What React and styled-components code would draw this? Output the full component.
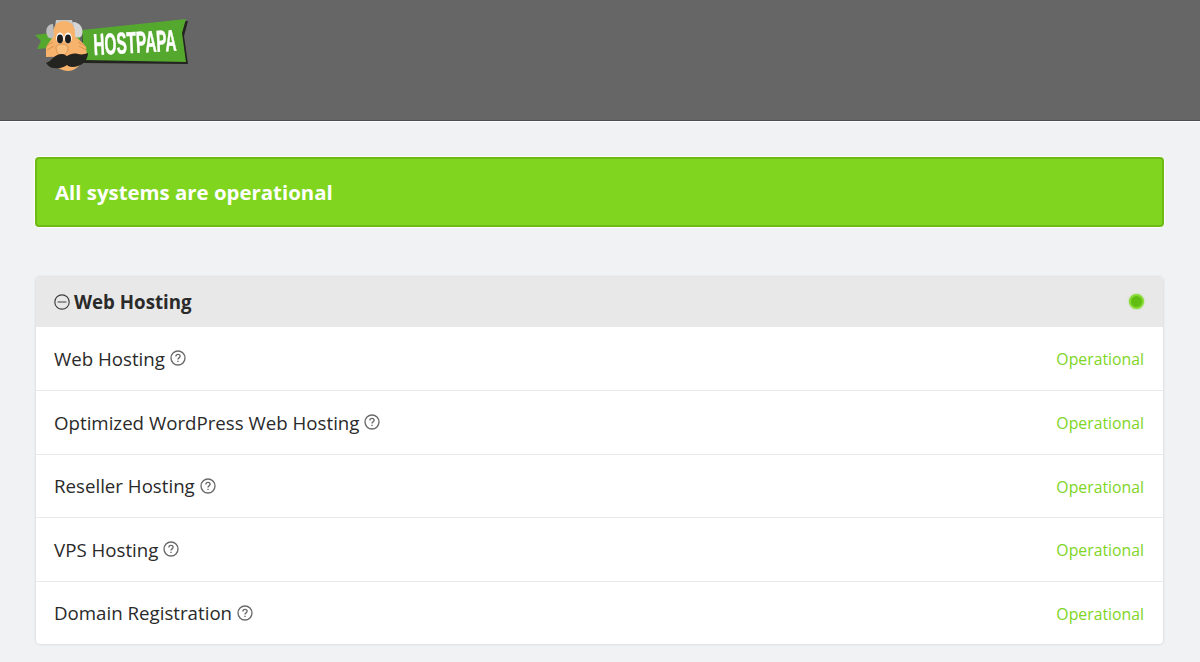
import React from "react";
import styled, { createGlobalStyle } from "styled-components";

const GlobalStyle = createGlobalStyle`
  html, body {
    margin: 0;
    padding: 0;
    height: 662px;
    overflow: hidden;
    background: #f0f2f4;
    font-family: "Open Sans", "Liberation Sans", sans-serif;
    color: #2a2a2a;
  }
`;

const Header = styled.header`
  box-sizing: border-box;
  height: 121px;
  padding: 18px 35px 0;
  background: #666666;
  border-bottom: 1px solid #4f4f4f;
  box-shadow: 0 1px 0 #fbfcfc;
`;

const Logo = styled.svg`
  display: block;
  width: 155px;
  height: 54px;
  overflow: visible;
  filter: blur(0.35px);
`;

const Main = styled.main`
  padding: 36px 36px 0 35px;
`;

const Alert = styled.div`
  box-sizing: border-box;
  display: flex;
  align-items: center;
  height: 70px;
  padding: 0 18px;
  background: #80d51f;
  border: 2px solid #6fba14;
  border-radius: 4px;
  box-shadow: 0 0 0 1px #fbfcfc;
  color: #ffffff;
  font-size: 20.4px;
  font-weight: 700;
`;

const Panel = styled.section`
  margin: 50px 1px 0;
  border-radius: 4px;
  background: #ffffff;
  box-shadow: 0 0 3px rgba(0, 0, 0, 0.16);
  overflow: hidden;
`;

const PanelHead = styled.div`
  box-sizing: border-box;
  display: flex;
  align-items: center;
  height: 49.5px;
  padding: 0 19px 0 18px;
  background: #e8e8e8;
  font-size: 18.7px;
  font-weight: 700;
`;

const HeadTitle = styled.span`
  margin-left: 4px;
  flex: 1;
`;

const Row = styled.div`
  box-sizing: border-box;
  display: flex;
  align-items: center;
  justify-content: space-between;
  height: 63.5px;
  padding: 0 19px 0 18px;
  border-top: ${(p) => (p.$first ? "none" : "1px solid #e8eaec")};
  font-size: 18.7px;
`;

const Name = styled.span`
  display: flex;
  align-items: center;
  gap: 5px;
`;

const Status = styled.span`
  padding-top: 2px;
  color: #80d51f;
  font-size: 15.8px;
`;

const Dot = styled.span`
  display: block;
  box-sizing: border-box;
  width: 15px;
  height: 15px;
  margin-right: 0.5px;
  border-radius: 50%;
  background: #62bd12;
  border: 2px solid #86da33;
  box-shadow: 0 0 2px rgba(126, 214, 28, 0.7);
`;

const MinusIcon = () => (
  <svg width="16" height="16" viewBox="0 0 16 16" fill="none" stroke="#3f3f3f" strokeWidth="1.2">
    <circle cx="8" cy="8" r="7.2" />
    <path d="M3.6 8h8.8" />
  </svg>
);

const HelpIcon = () => (
  <svg width="16" height="16" viewBox="0 0 16 16" fill="none" stroke="#6a6a6a" strokeWidth="1.35">
    <circle cx="8" cy="8" r="7" />
    <path d="M5.9 6.4c0-1.2 1-2 2.1-2s2.1.8 2.1 1.9c0 1.5-2.1 1.6-2.1 3.1" />
    <path d="M8 10.8v1.2" />
  </svg>
);

// viewBox uses page coordinates, so points can be read straight off the screenshot
const HostPapaLogo = () => (
  <Logo viewBox="35 18 155 54" role="img" aria-label="HostPapa">
    <path d="M82 33L188 21L184 36L188 64L83 63Z" fill="#23231f" />
    <path d="M82 30L186 19L182 33L186 62L84 60Z" fill="#55a82e" />
    <path d="M50 33L80 34V55L52 53L49 48L37 49L41 41L35 35Z" fill="#55a82e" />
    <text x="94" y="55" fill="#fff" stroke="#fff" strokeWidth="0.6" fontFamily="Liberation Sans, sans-serif" fontSize="30" fontWeight="700" textLength="83" lengthAdjust="spacingAndGlyphs" transform="rotate(-3 94 55)">HOSTPAPA</text>
    <path d="M53 24C47 24 45 30 47 35C48 39 52 39 55 38Z" fill="#bdbdbd" />
    <path d="M73 22C80 22 84 29 82 35C81 38 77 38 74 37Z" fill="#d6d6d6" />
    <path d="M56 20L72 20L74 27H55Z" fill="#c8c8c8" />
    <path d="M54 36C52 26 57 21 64 21C71 21 76 26 75 36C79 40 83 42 86 47L87 56L46 57L46 48C48 43 51 40 54 36Z" fill="#f7b36b" />
    <path d="M46 46L53 42M47 50L54 46M85 46L78 42M86 50L79 46" stroke="#c98542" strokeWidth="0.7" fill="none" />
    <path d="M56 47C58 43 66 43 68 47C68 52 66 55 62 55C58 55 56 52 56 47Z" fill="#fbbf7d" stroke="#c98542" strokeWidth="0.7" />
    <ellipse cx="60" cy="38" rx="3.8" ry="5.4" fill="#fff" />
    <ellipse cx="68" cy="38" rx="3.8" ry="5.4" fill="#fff" />
    <ellipse cx="60" cy="39" rx="3" ry="4.4" fill="#1d1d1d" />
    <ellipse cx="68" cy="39" rx="3" ry="4.4" fill="#1d1d1d" />
    <path d="M52 62C56 67 62 71 68 71C74 71 80 66 82 62Z" fill="#f7b36b" />
    <path d="M46 63C51 62 54 54 62 54C65 54 66 56 67 56C70 54 74 53 78 54C82 55 85 54 88 53C88 60 82 67 72 67C70 67 68 66 67 65C64 67 60 69 54 68C51 68 48 66 46 63Z" fill="#23231f" />
  </Logo>
);

const services = [
  "Web Hosting",
  "Optimized WordPress Web Hosting",
  "Reseller Hosting",
  "VPS Hosting",
  "Domain Registration",
];

export default function App() {
  return (
    <>
      <GlobalStyle />
      <Header>
        <HostPapaLogo />
      </Header>
      <Main>
        <Alert>All systems are operational</Alert>
        <Panel>
          <PanelHead>
            <MinusIcon />
            <HeadTitle>Web Hosting</HeadTitle>
            <Dot />
          </PanelHead>
          {services.map((name, i) => (
            <Row key={name} $first={i === 0}>
              <Name>
                {name}
                <HelpIcon />
              </Name>
              <Status>Operational</Status>
            </Row>
          ))}
        </Panel>
      </Main>
    </>
  );
}
